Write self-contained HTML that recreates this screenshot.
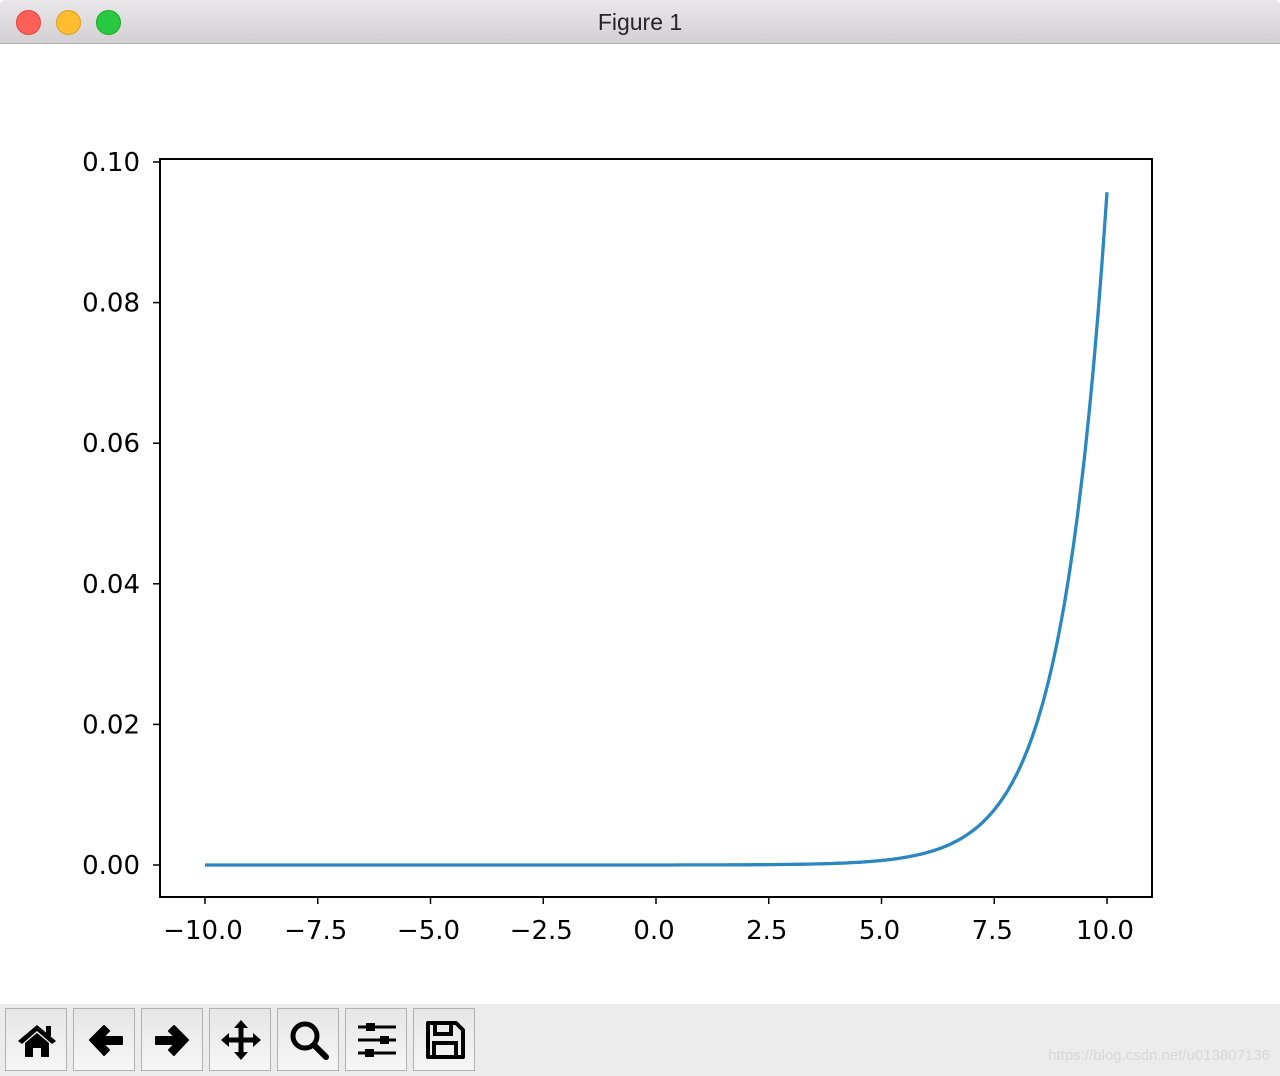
<!DOCTYPE html>
<html><head><style>
body{margin:0;width:1280px;height:1076px;overflow:hidden;background:#fff;font-family:"DejaVu Sans","Liberation Sans",sans-serif;position:relative}
.tb{position:absolute;left:0;top:0;width:1280px;height:43px;background:linear-gradient(#e9e7e9,#d2d0d2);border-bottom:1px solid #b3b1b3;border-radius:5px 5px 0 0}
.c{position:absolute;top:10px;width:23px;height:23px;border-radius:50%}
.title{position:absolute;top:9px;left:0;width:1280px;text-align:center;font:23px "Liberation Sans",sans-serif;color:#262626}
.bar{position:absolute;left:0;top:1004px;width:1280px;height:72px;background:#ececec}
.btn{position:absolute;top:1008px;width:60px;height:61px;border:1px solid #b0b0b0;background:linear-gradient(#e6e6e6,#f6f6f6)}
.btn svg{position:absolute;left:10px;top:10px}
.wm{position:absolute;right:10px;top:1047px;font:15px "Liberation Sans",sans-serif;color:#d8d8d8}
</style></head><body>
<div class="tb"></div>
<div class="c" style="left:16px;background:#fe5f57;border:0.5px solid #e0443e"></div>
<div class="c" style="left:56px;background:#febc2e;border:0.5px solid #dea123"></div>
<div class="c" style="left:96px;background:#28c840;border:0.5px solid #1aab29"></div>
<div class="title">Figure 1</div>
<svg width="1280" height="1000" style="position:absolute;left:0;top:0" font-family="DejaVu Sans" font-size="26">
<rect x="160" y="159" width="992" height="738" fill="none" stroke="#000" stroke-width="2"/>
<g stroke="#000" stroke-width="1.5" id="ticks"></g>
<g id="lab" fill="#000"></g>
<polyline id="curve" fill="none" stroke="#2b87bf" stroke-width="3.3"/>
</svg>
<div class="bar"></div>
<div class="btn" style="left:5px"><svg width="42" height="42" viewBox="0 0 42 42"><path d="M2 22 L21 6 L40 22 L36 25 L21 12 L6 25Z" fill="#000"/><rect x="30" y="7" width="5" height="10"/><path d="M9 24 L21 14 L33 24 V38 H25 V29 H17 V38 H9Z" fill="#000"/></svg></div>
<div class="btn" style="left:73px"><svg width="42" height="42" viewBox="0 0 42 42"><path d="M6 21 L20 7 L25 12 L19 18 H38 V25 H19 L25 31 L20 36Z" fill="#000" stroke="#000" stroke-linejoin="round" stroke-width="2"/></svg></div>
<div class="btn" style="left:141px"><svg width="42" height="42" viewBox="0 0 42 42"><path d="M36 21 L22 7 L17 12 L23 18 H4 V25 H23 L17 31 L22 36Z" fill="#000" stroke="#000" stroke-linejoin="round" stroke-width="2"/></svg></div>
<div class="btn" style="left:209px"><svg width="42" height="42" viewBox="0 0 42 42"><path d="M21 1 L28 9 H23.5 V18.5 H33 V14 L41 21 L33 28 V23.5 H23.5 V33 H28 L21 41 L14 33 H18.5 V23.5 H9 V28 L1 21 L9 14 V18.5 H18.5 V9 H14Z" fill="#000"/></svg></div>
<div class="btn" style="left:277px"><svg width="42" height="42" viewBox="0 0 42 42"><circle cx="17" cy="17" r="12" fill="none" stroke="#000" stroke-width="5"/><path d="M26 26 L38 38" stroke="#000" stroke-width="6" stroke-linecap="round"/></svg></div>
<div class="btn" style="left:345px"><svg width="42" height="42" viewBox="0 0 42 42"><g stroke="#000" stroke-width="3"><path d="M2 8H40M2 21H40M2 34H40"/></g><rect x="10" y="4" width="9" height="8"/><rect x="24" y="17" width="9" height="8"/><rect x="9" y="30" width="9" height="8"/></svg></div>
<div class="btn" style="left:413px"><svg width="42" height="42" viewBox="0 0 42 42"><path d="M4 4 H32 L39 11 V38 H4Z" fill="none" stroke="#000" stroke-width="4" stroke-linejoin="round"/><rect x="11" y="4" width="16" height="11" fill="none" stroke="#000" stroke-width="4"/><rect x="10" y="24" width="22" height="14" fill="none" stroke="#000" stroke-width="4"/></svg></div>
<div class="wm">https://blog.csdn.net/u013807136</div>
<script>
var ns="http://www.w3.org/2000/svg",t=document.getElementById('ticks'),l=document.getElementById('lab');
function el(n,a,p,txt){var e=document.createElementNS(ns,n);for(var k in a)e.setAttribute(k,a[k]);if(txt)e.textContent=txt;p.appendChild(e);}
var xl=['\u221210.0','\u22127.5','\u22125.0','\u22122.5','0.0','2.5','5.0','7.5','10.0'];
for(var i=0;i<9;i++){var x=205+i*112.75;el('line',{x1:x,x2:x,y1:897,y2:904},t);el('text',{x:x-2,y:939,'text-anchor':'middle'},l,xl[i]);}
var yl=['0.00','0.02','0.04','0.06','0.08','0.10'];
for(var i=0;i<6;i++){var y=865-i*140.6;el('line',{x1:153,x2:160,y1:y,y2:y},t);el('text',{x:140,y:y+9,'text-anchor':'end'},l,yl[i]);}
var pts=[];for(var i=0;i<=400;i++){var xv=-10+i*0.05;var yv=0.0957*Math.exp(xv-10);pts.push((205+(xv+10)*45.1).toFixed(1)+','+(865-yv*7030).toFixed(1));}
document.getElementById('curve').setAttribute('points',pts.join(' '));
</script>
</body></html>
